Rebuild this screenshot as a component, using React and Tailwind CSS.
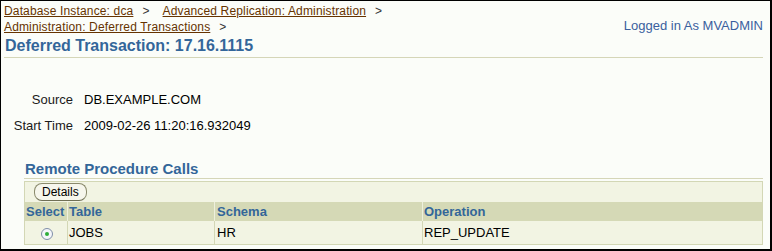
import React from "react";

function Radio() {
  return (
    <span className="relative inline-block w-[12px] h-[12px] rounded-full border border-[#7f8ea8] bg-[#f4f6fa]">
      <span className="absolute left-[3px] top-[3px] w-[4px] h-[4px] rounded-full bg-[#2fae3a]" />
    </span>
  );
}

export default function App() {
  return (
    <div className="w-[772px] h-[251px] overflow-hidden border-t border-l border-r-2 border-b-2 border-black bg-[#fbfdf9] font-['Liberation_Sans',Arial,sans-serif] text-black">
      <div className="pl-[3px] pr-[7px] pt-[2px]">
        <div className="flex justify-between items-start">
          <div>
            <div className="text-[12px] leading-[16px] whitespace-nowrap tracking-[0.15px]">
              <a className="text-[#663300] underline">Database Instance: dca</a>
              <span className="ml-[9px] mr-[13px] text-[#333]">&gt;</span>
              <a className="text-[#663300] underline">Advanced Replication: Administration</a>
              <span className="ml-[9px] text-[#333]">&gt;</span>
            </div>
            <div className="text-[12px] leading-[16px] whitespace-nowrap tracking-[0.15px]">
              <a className="text-[#663300] underline">Administration: Deferred Transactions</a>
              <span className="ml-[9px] text-[#333]">&gt;</span>
            </div>
            <h1 className="mt-[1px] text-[16px] leading-[20px] font-bold text-[#336699] pl-[1px]">
              Deferred Transaction: 17.16.1115
            </h1>
          </div>
          <div className="mt-[15px] text-[13px] leading-[16px] text-[#3a5f9e]">Logged in As MVADMIN</div>
        </div>
        <div className="mt-[1px] h-px bg-[#d5d6b8]" />
      </div>

      <div className="mt-[34px] grid grid-cols-[72px_auto] gap-x-[11px] gap-y-[10px] text-[13px] leading-[16px]">
        <div className="text-right text-[#1a1a1a]">Source</div>
        <div>DB.EXAMPLE.COM</div>
        <div className="text-right text-[#1a1a1a]">Start Time</div>
        <div>2009-02-26 11:20:16.932049</div>
      </div>

      <div className="mt-[26px] pl-[23px] pr-[7px]">
        <h2 className="pl-[1px] text-[15px] leading-[18px] font-bold text-[#336699]">Remote Procedure Calls</h2>
        <div className="h-px bg-[#d5d6b8]" />
        <div className="mt-[2px] border border-[#d3d7b5] bg-[#f2f4e3]">
          <div className="flex pt-[1px] pb-[1px] pl-[9px]">
            <button className="h-[18px] px-[7px] rounded-[8px] border border-[#8a8a6c] border-b-[#6f6f55] bg-[#f6f6ec] text-[12px] leading-[16px] text-black">
              Details
            </button>
          </div>
          <div className="grid grid-cols-[42px_147px_208px_1fr] bg-[#d5d9b6] text-[13px] leading-[19px] font-bold text-[#336699]">
            <div className="pl-[1px]">Select</div>
            <div className="pl-[1px] border-l border-[#eef0dd]">Table</div>
            <div className="pl-[2px] border-l border-[#eef0dd]">Schema</div>
            <div className="pl-[1px] border-l border-[#eef0dd]">Operation</div>
          </div>
          <div className="grid grid-cols-[42px_147px_208px_1fr] text-[13px] leading-[23px]">
            <div className="flex items-center justify-center pt-[2px] pl-[1px]">
              <Radio />
            </div>
            <div className="pl-[1px] border-l border-[#d3d7b5]">JOBS</div>
            <div className="pl-[2px] border-l border-[#d3d7b5]">HR</div>
            <div className="pl-[1px] border-l border-[#d3d7b5]">REP_UPDATE</div>
          </div>
        </div>
      </div>
    </div>
  );
}
